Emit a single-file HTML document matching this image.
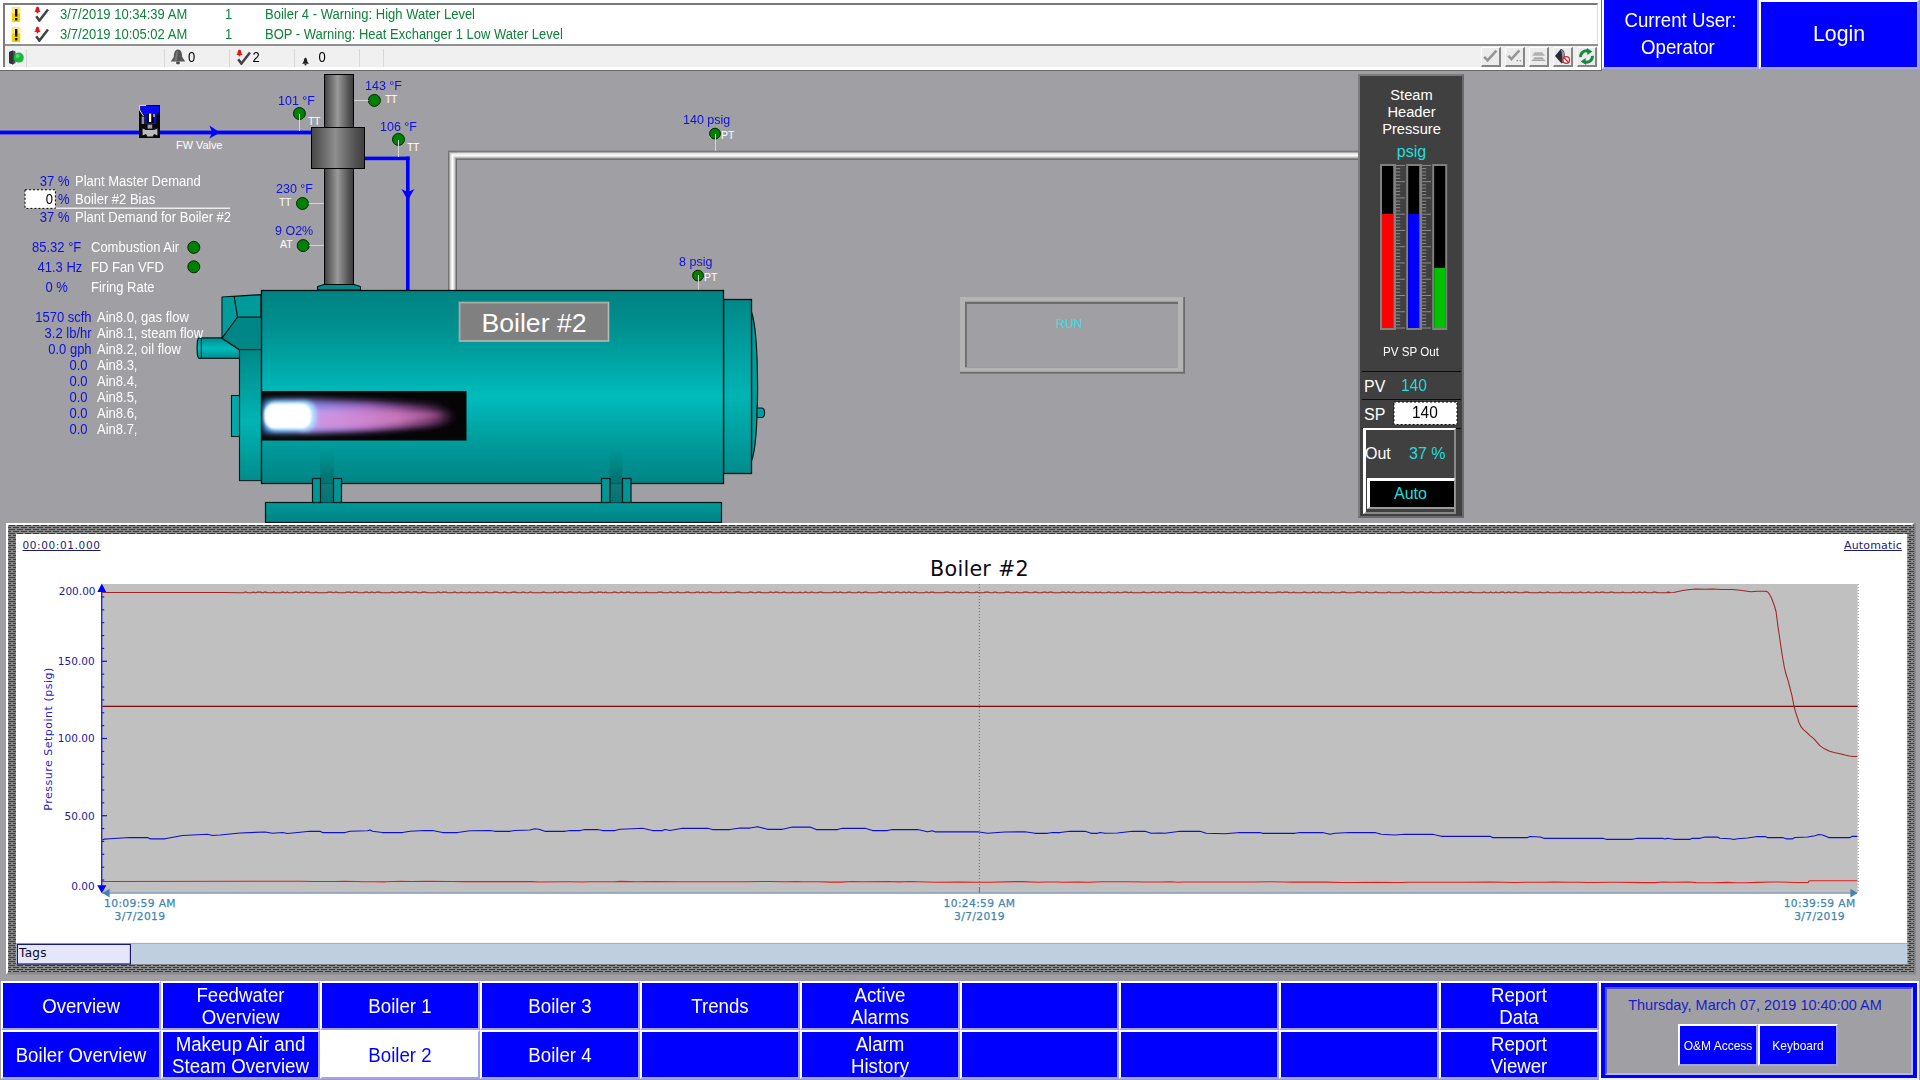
<!DOCTYPE html>
<html lang="en">
<head>
<meta charset="utf-8">
<title>Boiler #2</title>
<style>
*{box-sizing:border-box;margin:0;padding:0}
html,body{width:1920px;height:1080px;overflow:hidden}
body{background:#a0a0a4;font-family:"Liberation Sans",Arial,sans-serif;position:relative;color:#fff}
.abs{position:absolute}
.t{position:absolute;white-space:nowrap;line-height:1}
/* alarm banner */
#alarm{position:absolute;left:0;top:0;width:1602px;height:71px;background:#fff;border-bottom:1px solid #696969;border-right:1px solid #696969}
#alarm .in{position:absolute;left:3px;top:3px;width:1595px;height:64px;border:2px solid #7a7a7a;border-right:1px solid #e0e0e0;border-bottom:none;background:#fff}
#alarm .tb{position:absolute;left:0;top:38.5px;width:1593px;height:23.5px;background:#f0f0f0;border-top:2px solid #909090}
#alarm .tb>*{margin-top:1.5px}
.arow{position:absolute;left:0;height:20px;width:1590px;color:#10823a;font-size:13px}
.arow span{position:absolute;top:2px;line-height:15px;white-space:nowrap;transform:scaleY(1.08);transform-origin:0 80%}
.sep{position:absolute;top:2px;width:1px;height:18px;background:#d8d8d8}
.tbtxt{position:absolute;top:3px;font-size:13px;color:#000;line-height:15px;transform:scaleY(1.08);transform-origin:0 80%}
.tbbtn{position:absolute;top:0px;width:20px;height:20px;background:#ececec;border:1px solid #fff;border-right:2px solid #858585;border-bottom:2px solid #858585}
/* blue buttons */
.bb{position:absolute;background:#0000ff;color:#fff;border:2px solid #fff;border-right-color:#a4a4ee;border-bottom-color:#a4a4ee;display:flex;align-items:center;justify-content:center;text-align:center;font-size:18.67px;line-height:21px}
.nav{height:49px;padding-top:1px}
.bb.sel{background:#fff;color:#0000ff}
.nt{display:inline-block;transform:scaleY(1.05);transform-origin:50% 60%}
</style>
</head>
<body>

<!-- ===== alarm banner ===== -->
<div id="alarm"><div class="in">
  <div class="arow" style="top:0px">
    <svg class="abs" style="left:6px;top:2px" width="10" height="15" viewBox="0 0 10 15"><rect x="0.8" y="0" width="8.4" height="15" fill="#f3d000"/><rect x="0.8" y="0" width="8.4" height="6.5" fill="#fdf0a0" opacity=".75"/><rect x="4" y="2" width="2.4" height="7.6" fill="#111"/><rect x="4" y="11" width="2.4" height="2.4" fill="#111"/></svg>
    <svg class="abs" style="left:29px;top:1px" width="16" height="16" viewBox="0 0 16 16"><path d="M3.4 0.6 C2 1 1.6 3 1.4 4.6 L0.4 6 H6.6 L5.6 4.6 C5.4 3 5 1 3.4 0.6Z" fill="#e8141c"/><rect x="2.6" y="6" width="1.8" height="1.3" fill="#e8141c"/><path d="M2.2 10.2 L5.4 14.6 L14 3.6" fill="none" stroke="#444" stroke-width="2.5"/></svg>
    <span style="left:55px">3/7/2019 10:34:39 AM</span><span style="left:220px">1</span><span style="left:260px">Boiler 4 - Warning: High Water Level</span>
  </div>
  <div class="arow" style="top:20px">
    <svg class="abs" style="left:6px;top:2px" width="10" height="15" viewBox="0 0 10 15"><rect x="0.8" y="0" width="8.4" height="15" fill="#f3d000"/><rect x="0.8" y="0" width="8.4" height="6.5" fill="#fdf0a0" opacity=".75"/><rect x="4" y="2" width="2.4" height="7.6" fill="#111"/><rect x="4" y="11" width="2.4" height="2.4" fill="#111"/></svg>
    <svg class="abs" style="left:29px;top:1px" width="16" height="16" viewBox="0 0 16 16"><path d="M3.4 0.6 C2 1 1.6 3 1.4 4.6 L0.4 6 H6.6 L5.6 4.6 C5.4 3 5 1 3.4 0.6Z" fill="#e8141c"/><rect x="2.6" y="6" width="1.8" height="1.3" fill="#e8141c"/><path d="M2.2 10.2 L5.4 14.6 L14 3.6" fill="none" stroke="#444" stroke-width="2.5"/></svg>
    <span style="left:55px">3/7/2019 10:05:02 AM</span><span style="left:220px">1</span><span style="left:260px">BOP - Warning: Heat Exchanger 1 Low Water Level</span>
  </div>
  <div class="tb">
    <svg class="abs" style="left:4px;top:3px" width="16" height="15" viewBox="0 0 16 15"><path d="M0 2 L4 0.5 L6.5 1.5 V13 L4 14.5 L0 13Z" fill="#4a4f55"/><path d="M0 2 L4 0.5 V14.5 L0 13Z" fill="#30343a"/><circle cx="9.8" cy="7.6" r="5" fill="#18b838"/><circle cx="8.6" cy="6" r="2" fill="#6be084" opacity=".8"/></svg>
    <div class="sep" style="left:21px"></div>
    <div class="sep" style="left:159px"></div>
    <svg class="abs" style="left:164px;top:2px" width="18" height="17" viewBox="0 0 18 17"><path d="M9 0.6 C5.4 1 5 4.6 4.8 8 L1.8 12.6 H16.2 L13.2 8 C13 4.6 12.6 1 9 0.6Z" fill="#565656"/><path d="M9 1.4 C7 2 6.6 5 6.4 8 L5 11.6 H8 Z" fill="#7a7a7a"/><rect x="7.2" y="12.6" width="3.6" height="2.6" rx="1" fill="#4a4a4a"/></svg>
    <span class="tbtxt" style="left:183px">0</span>
    <div class="sep" style="left:224px"></div>
    <svg class="abs" style="left:231px;top:2px" width="16" height="16" viewBox="0 0 16 16"><path d="M3.4 0.6 C2 1 1.6 3 1.4 4.6 L0.4 6 H6.6 L5.6 4.6 C5.4 3 5 1 3.4 0.6Z" fill="#e8141c"/><rect x="2.6" y="6" width="1.8" height="1.3" fill="#e8141c"/><path d="M2.2 10.2 L5.4 14.6 L14 3.6" fill="none" stroke="#444" stroke-width="2.5"/></svg>
    <span class="tbtxt" style="left:247.5px">2</span>
    <div class="sep" style="left:289px"></div>
    <svg class="abs" style="left:295.6px;top:10px" width="9" height="9" viewBox="0 0 8 8"><path d="M4 0.5 C2.6 1 2.6 3 2.4 4 L1 6 H7 L5.6 4 C5.4 3 5.4 1 4 0.5Z" fill="#222"/><rect x="3.2" y="6" width="1.6" height="1.4" fill="#222"/></svg>
    <span class="tbtxt" style="left:313.5px">0</span>
    <div class="sep" style="left:354px"></div>
    <div class="sep" style="left:378px"></div>
    <div class="tbbtn" style="left:1476px"><svg width="17" height="17" viewBox="0 0 17 17"><path d="M2.2 8.8 L5.6 12.4 L14.4 2.6" fill="none" stroke="#969696" stroke-width="2.6"/></svg></div>
    <div class="tbbtn" style="left:1500px"><svg width="17" height="17" viewBox="0 0 17 17"><path d="M2.4 7.8 L5.4 11.2 L13.4 2.4" fill="none" stroke="#969696" stroke-width="2.5"/><rect x="10.6" y="12" width="1.4" height="1.4" fill="#9a9a9a"/><rect x="13.6" y="12" width="1.4" height="1.4" fill="#9a9a9a"/></svg></div>
    <div class="tbbtn" style="left:1524px"><svg width="17" height="17" viewBox="0 0 17 17"><path d="M4.6 4.4 H12.4 L14.8 7.6 H2.2 Z M4.4 9.6 H12.6 L15.4 12.8 H1.6 Z" fill="#8e8e8e"/><path d="M3 6 H14 M2.6 11.2 H14.4" stroke="#ececec" stroke-width=".8"/></svg></div>
    <div class="tbbtn" style="left:1548px"><svg width="17" height="17" viewBox="0 0 17 17"><path d="M1 8 L6.8 1 C9 1 10.6 3 10.8 8 C10.6 12 9 15 7.6 15.4 Z" fill="#2a2e34"/><path d="M6.8 1.6 C9.6 2 10.8 6 10.6 9 C10 12 9 14 7.8 15 C8.6 11 8.4 5 6.8 1.6Z" fill="#8c98a4"/><circle cx="12.2" cy="12" r="3.3" fill="#fff" stroke="#e02030" stroke-width="1.3"/><path d="M10 9.8 L14.4 14.2" stroke="#e02030" stroke-width="1.3"/></svg></div>
    <div class="tbbtn" style="left:1572px"><svg width="17" height="17" viewBox="0 0 17 17"><path d="M2.6 9.2 A5.9 5.9 0 0 1 10 3" fill="none" stroke="#138a3a" stroke-width="2.8"/><path d="M8.8 0 L14.4 3.4 L9.4 7Z" fill="#138a3a"/><path d="M14.4 7.8 A5.9 5.9 0 0 1 7 14" fill="none" stroke="#138a3a" stroke-width="2.8"/><path d="M8.2 17 L2.6 13.6 L7.6 10Z" fill="#138a3a"/></svg></div>
  </div>
</div></div>

<!-- ===== top right buttons ===== -->
<div class="bb" style="left:1602px;top:-2px;width:157px;height:71px;font-size:18.67px;line-height:25.4px;padding-top:1.5px"><span class="nt">Current User:<br>Operator&nbsp;</span></div>
<div class="bb" style="left:1759px;top:0;width:160px;height:69px;font-size:21.33px"><span class="nt">Login</span></div>

<!-- ===== process graphic ===== -->
<style>
.v{position:absolute;white-space:nowrap;line-height:15px;font-size:13px;color:#1010dc;transform:scaleY(1.08);transform-origin:0 80%}
.l{position:absolute;white-space:nowrap;line-height:15px;font-size:13px;color:#fff;transform:scaleY(1.08);transform-origin:0 80%}
.r{text-align:right}
.sv{position:absolute;white-space:nowrap;line-height:14px;font-size:12.5px;color:#1010dc;transform:scaleY(1.08);transform-origin:0 80%}
.tt{position:absolute;white-space:nowrap;line-height:10px;font-size:10.5px;color:#fff;letter-spacing:-0.4px}
</style>
<svg class="abs" style="left:0;top:70px" width="1360" height="453" viewBox="0 70 1360 453">
  <defs>
    <linearGradient id="gPipe" x1="0" x2="1" y1="0" y2="0"><stop offset="0" stop-color="#3c3c3c"/><stop offset=".12" stop-color="#5a5a5a"/><stop offset=".45" stop-color="#9a9a9a"/><stop offset=".8" stop-color="#585858"/><stop offset="1" stop-color="#3a3a3a"/></linearGradient>
    <linearGradient id="gCol" x1="0" x2="1" y1="0" y2="0"><stop offset="0" stop-color="#484848"/><stop offset=".12" stop-color="#585858"/><stop offset=".45" stop-color="#8e8e8e"/><stop offset=".8" stop-color="#565656"/><stop offset="1" stop-color="#3e3e3e"/></linearGradient>
    <linearGradient id="gSteamV" x1="0" x2="1" y1="0" y2="0"><stop offset="0" stop-color="#5c5c5c"/><stop offset=".12" stop-color="#8c8c8c"/><stop offset=".3" stop-color="#e0e0e0"/><stop offset=".5" stop-color="#ffffff"/><stop offset=".7" stop-color="#d8d8d8"/><stop offset=".88" stop-color="#888"/><stop offset="1" stop-color="#505050"/></linearGradient>
    <linearGradient id="gSteamH" x1="0" x2="0" y1="0" y2="1"><stop offset="0" stop-color="#5c5c5c"/><stop offset=".12" stop-color="#8c8c8c"/><stop offset=".3" stop-color="#e0e0e0"/><stop offset=".5" stop-color="#ffffff"/><stop offset=".7" stop-color="#d8d8d8"/><stop offset=".88" stop-color="#888"/><stop offset="1" stop-color="#505050"/></linearGradient>
    <linearGradient id="gBoil" x1="0" x2="0" y1="0" y2="1"><stop offset="0" stop-color="#008282"/><stop offset=".2" stop-color="#009090"/><stop offset=".55" stop-color="#00bcbc"/><stop offset=".8" stop-color="#009a9a"/><stop offset="1" stop-color="#008484"/></linearGradient>
    <linearGradient id="gRear" x1="0" x2="0" y1="0" y2="1"><stop offset="0" stop-color="#008888"/><stop offset=".55" stop-color="#00b4b4"/><stop offset="1" stop-color="#008c8c"/></linearGradient>
    <linearGradient id="gStub" x1="0" x2="0" y1="0" y2="1"><stop offset="0" stop-color="#008a8a"/><stop offset=".5" stop-color="#00bcbc"/><stop offset="1" stop-color="#008c8c"/></linearGradient>
    <linearGradient id="gSkid" x1="0" x2="0" y1="0" y2="1"><stop offset="0" stop-color="#009a9a"/><stop offset="1" stop-color="#008080"/></linearGradient>
    <linearGradient id="gLeg" x1="0" x2="0" y1="0" y2="1"><stop offset="0" stop-color="#008080" stop-opacity="0"/><stop offset=".55" stop-color="#007070" stop-opacity=".85"/><stop offset="1" stop-color="#007474"/></linearGradient>
    <radialGradient id="gFlW" cx=".5" cy=".5" r=".5"><stop offset="0" stop-color="#ffffff"/><stop offset=".55" stop-color="#f4fbff"/><stop offset=".8" stop-color="#9ad4f0" stop-opacity=".9"/><stop offset="1" stop-color="#3070a0" stop-opacity="0"/></radialGradient>
    <linearGradient id="gFlP" x1="0" x2="1" y1="0" y2="0"><stop offset="0" stop-color="#d8a8f4"/><stop offset=".3" stop-color="#d494e4"/><stop offset=".62" stop-color="#cc74b8"/><stop offset=".88" stop-color="#a0508c" stop-opacity=".7"/><stop offset="1" stop-color="#402040" stop-opacity="0"/></linearGradient>
    <linearGradient id="gFlB" x1="0" x2="1" y1="0" y2="0"><stop offset="0" stop-color="#3c88d8"/><stop offset=".22" stop-color="#7c84e0"/><stop offset=".55" stop-color="#8858b0"/><stop offset=".85" stop-color="#603070" stop-opacity=".7"/><stop offset="1" stop-color="#301838" stop-opacity="0"/></linearGradient>
    <filter id="blur3" x="-20%" y="-50%" width="140%" height="200%"><feGaussianBlur stdDeviation="3.2"/></filter>
    <filter id="blur1" x="-20%" y="-50%" width="140%" height="200%"><feGaussianBlur stdDeviation="1.2"/></filter>
    <filter id="blur2" x="-20%" y="-50%" width="140%" height="200%"><feGaussianBlur stdDeviation="2"/></filter>
  </defs>

  <!-- steam pipe (white/gray) -->
  <rect x="448" y="150.8" width="912" height="8.8" fill="url(#gSteamH)"/>
  <rect x="448" y="151" width="9" height="140" fill="url(#gSteamV)"/>
  <path d="M448 151 H457 V159.5 Z" fill="url(#gSteamH)"/>

  <!-- feedwater line -->
  <rect x="0" y="130.6" width="312" height="3.8" fill="#0000ff"/>
  <path d="M209.4 125.4 L220 132.5 L209.4 138.6 L212.2 132.5 Z" fill="#0000ff"/>
  <rect x="364" y="156.6" width="45.6" height="3.6" fill="#0000ff"/>
  <rect x="406" y="156.6" width="3.6" height="134" fill="#0000ff"/>
  <path d="M401.4 189 L407.8 200.2 L414.4 189 L407.8 192.2 Z" fill="#0000ff"/>

  <!-- valve icon -->
  <rect x="139" y="105" width="21" height="33" fill="#0a0a0a"/>
  <path d="M140.5 106 H159.4 V111 C159.4 113 157 113.6 156.4 115 L156 124 H145 L144.6 115 C144 113.6 140.5 113 140.5 111 Z" fill="#0a0af0"/>
  <rect x="146.6" y="114" width="7.4" height="9" fill="#0a0a0a"/>
  <rect x="149" y="113.6" width="2.2" height="8.4" fill="#fff"/>
  <rect x="153.4" y="114" width="1.2" height="3" fill="#e8e8e8"/>
  <rect x="141.6" y="116.6" width="2.6" height="7.4" fill="#8c8cb4"/>
  <rect x="147.6" y="124.6" width="4.6" height="4" fill="#9c9cb8"/>
  <path d="M142.6 128.4 L146 130 H154 L157.4 128.4 V135.6 L154 134 L152.6 136.4 H147.4 L146 134 L142.6 135.6 Z" fill="#bcbcbc"/>
  <path d="M139.4 105.4 H146 M139.6 105.4 V110 L143.4 116" fill="none" stroke="#fff" stroke-width="0.9"/>

  <!-- stack -->
  <rect x="324.5" y="74.5" width="29" height="211" fill="url(#gPipe)" stroke="#000" stroke-width="1"/>
  <rect x="311.5" y="127.5" width="53" height="41" fill="url(#gCol)" stroke="#000" stroke-width="1"/>
  <path d="M317.5 290 V286.5 L324 284.5 H354 L360.5 286.5 V290 Z" fill="#008c8c" stroke="#000" stroke-width="1"/>

  <!-- sensor bulbs -->
  <g fill="#008000" stroke="#002800" stroke-width="1">
    <circle cx="299.4" cy="113.5" r="6"/><circle cx="374.4" cy="100.4" r="6"/><circle cx="398.5" cy="139.4" r="6"/>
    <circle cx="302.5" cy="203.5" r="6"/><circle cx="303.2" cy="245.6" r="6"/>
    <circle cx="715" cy="133.6" r="5.4"/><circle cx="698" cy="275.6" r="5.4"/>
    <circle cx="193.8" cy="247.4" r="6"/><circle cx="193.8" cy="266.8" r="6"/>
  </g>

  <!-- sensor leader lines -->
  <g stroke="#d4d4d4" stroke-width="1">
    <path d="M299.5 114 V131"/><path d="M354 100.5 H368.4"/><path d="M398.5 140 V157"/><path d="M308.6 203.5 H324"/><path d="M309.2 245.5 H324"/>
    <path d="M715.5 134 V151"/><path d="M698.5 275 V290"/>
  </g>
  <!-- boiler -->
  <!-- skid and legs -->
  <rect x="265.5" y="502.5" width="456" height="20" fill="url(#gSkid)" stroke="#001818" stroke-width="1.2"/>
  <!-- rear -->
  <path d="M751.5 312 C755 322 757.4 350 757.6 388 C757.4 425 755 452 751.5 461 Z" fill="#009c9c" stroke="#001818" stroke-width="1.2"/>
  <path d="M757 408 H761.6 C765.6 408 765.6 417.5 761.6 417.5 H757 Z" fill="#00a0a0" stroke="#001818" stroke-width="1.1"/>
  <rect x="723.5" y="299.5" width="28" height="174" fill="url(#gRear)" stroke="#001010" stroke-width="1.3"/>
  <!-- front -->
  <path d="M239.5 337.9 H199 C196.4 337.9 196.4 358.3 199 358.3 H239.5 Z" fill="url(#gStub)" stroke="#001c1c" stroke-width="1.2"/>
  <path d="M201.3 338 V358.2" stroke="#002828" stroke-width="1"/>
  <path d="M222.1 297.1 L261 294.6 V349.6 H239.2 L222.1 338.2 Z" fill="#009a9a" stroke="#001414" stroke-width="1.3" stroke-linejoin="round"/>
  <path d="M237.5 317.1 H261 V349.4 H239.2 L222.6 338.4 Z" fill="#008686"/>
  <path d="M222.6 297.6 L234.2 297 L237.5 316.9 L222.6 337.8 Z" fill="#009c9c"/>
  <path d="M234.2 296.6 L237.5 317 L222.1 338.2 L239.2 349.6 H261 M237.5 317.1 H261" fill="none" stroke="#001414" stroke-width="1.2" stroke-linejoin="round"/>
  <rect x="239.5" y="349.6" width="22" height="131" fill="url(#gRear)" stroke="#002020" stroke-width="1.1"/>
  <rect x="231.5" y="395.5" width="8" height="41" fill="#00a8a8" stroke="#002020" stroke-width="1.1"/>
  <!-- shell -->
  <rect x="261.5" y="290.5" width="462" height="193" fill="url(#gBoil)" stroke="#001010" stroke-width="1.3"/>
  <!-- legs (front plates) -->
  <rect x="320" y="450" width="14" height="52.5" fill="url(#gLeg)"/>
  <rect x="609.5" y="450" width="13" height="52.5" fill="url(#gLeg)"/>
  <g fill="#009494" stroke="#001818" stroke-width="1.2">
    <rect x="312.5" y="478.5" width="8" height="24"/><rect x="333.5" y="478.5" width="8" height="24"/>
    <rect x="601.5" y="478.5" width="8.5" height="24"/><rect x="622.5" y="478.5" width="8.5" height="24"/>
  </g>
  <!-- flame window -->
  <rect x="261.5" y="391" width="205" height="49.5" fill="#050505"/>
  <g>
    <clipPath id="cf"><rect x="261.5" y="391" width="205" height="49.5"/></clipPath>
    <g clip-path="url(#cf)">
      <path d="M263 400 C300 398 380 401 440 405 C462 410 462 421 440 426 C380 431 300 434 263 433 Z" fill="url(#gFlB)" filter="url(#blur3)"/>
      <path d="M300 409 C350 406 420 408 454 412 C459 415 459 419 454 421 C420 427 350 431 300 430 Z" fill="url(#gFlP)" filter="url(#blur3)" opacity=".82"/>
      <path d="M320 416 C360 413 410 412 446 414 C410 421 360 427 320 427 Z" fill="#e08ccc" opacity=".35" filter="url(#blur2)"/>
      <rect x="264" y="401" width="52" height="30" rx="12" fill="#a8e4ff" filter="url(#blur2)"/>
      <rect x="264.5" y="403.5" width="47" height="25" rx="10" fill="#fff" filter="url(#blur1)"/>
    </g>
  </g>
  <!-- label plate -->
  <rect x="459.5" y="302.5" width="149" height="38.5" fill="#808080" stroke="#b8b8b8" stroke-width="1.6"/>
  <path d="M460 341 V303 H608" fill="none" stroke="#9a9a9a" stroke-width="1.2"/>
  <text x="534" y="331.6" font-size="26.67" fill="#fff" text-anchor="middle" font-family="Liberation Sans, Arial, sans-serif">Boiler #2</text>

  <!-- underline for bias -->
  <rect x="55" y="207.6" width="175" height="1.2" fill="#fff"/>

  <!-- RUN box -->
  <rect x="960" y="297" width="225" height="76.7" fill="#6c6c6c"/>
  <rect x="960" y="297" width="223.2" height="74.8" fill="#b4b4b4"/>
  <rect x="965" y="301.7" width="213" height="65.6" fill="#6c6c6c"/>
  <rect x="966.8" y="304" width="211.2" height="63.3" fill="#a0a0a4"/>
</svg>

<!-- valve / sensor text -->
<div class="tt" style="left:176px;top:140px;font-size:10.9px;letter-spacing:0">FW Valve</div>
<div class="sv" style="left:278px;top:94px">101 °F</div><div class="tt" style="left:308px;top:116px">TT</div>
<div class="sv" style="left:365px;top:79px">143 °F</div><div class="tt" style="left:385px;top:94px">TT</div>
<div class="sv" style="left:380px;top:120px">106 °F</div><div class="tt" style="left:407px;top:142px">TT</div>
<div class="sv" style="left:276px;top:182px">230 °F</div><div class="tt" style="left:279px;top:197px">TT</div>
<div class="sv" style="left:275px;top:224px">9 O2%</div><div class="tt" style="left:280px;top:239px;letter-spacing:0">AT</div>
<div class="sv" style="left:683px;top:113px">140 psig</div><div class="tt" style="left:721px;top:130px;letter-spacing:0">PT</div>
<div class="sv" style="left:679px;top:255px">8 psig</div><div class="tt" style="left:704px;top:272px;letter-spacing:0">PT</div>

<!-- demand block -->
<div class="v r" style="left:20px;width:49.5px;top:174px">37 %</div><div class="l" style="left:75px;top:174px">Plant Master Demand</div>
<svg class="abs" style="left:24px;top:189px" width="33" height="21"><rect x="1" y="0.8" width="30.4" height="18.6" fill="#fff"/><rect x="1" y="0.8" width="30.4" height="18.6" fill="none" stroke="#000" stroke-width="1" stroke-dasharray="2 2"/></svg>
<div class="v r" style="left:20px;width:33px;top:192px;color:#000">0</div>
<div class="v r" style="left:20px;width:49.5px;top:192px">%</div><div class="l" style="left:75px;top:192px">Boiler #2 Bias</div>
<div class="v r" style="left:20px;width:49.5px;top:210px">37 %</div><div class="l" style="left:75px;top:210px">Plant Demand for Boiler #2</div>

<div class="v" style="left:32px;top:240px">85.32 °F</div><div class="l" style="left:91px;top:240px">Combustion Air</div>
<div class="v" style="left:37.5px;top:260px">41.3 Hz</div><div class="l" style="left:91px;top:260px">FD Fan VFD</div>
<div class="v" style="left:45.5px;top:280px">0 %</div><div class="l" style="left:91px;top:280px">Firing Rate</div>

<div class="v r" style="left:20px;width:71.6px;top:310px">1570 scfh</div><div class="l" style="left:97px;top:310px">Ain8.0, gas flow</div>
<div class="v r" style="left:20px;width:71.6px;top:326px">3.2 lb/hr</div><div class="l" style="left:97px;top:326px">Ain8.1, steam flow</div>
<div class="v r" style="left:20px;width:71.6px;top:342px">0.0 gph</div><div class="l" style="left:97px;top:342px">Ain8.2, oil flow</div>
<div class="v r" style="left:20px;width:67.6px;top:358px">0.0</div><div class="l" style="left:97px;top:358px">Ain8.3,</div>
<div class="v r" style="left:20px;width:67.6px;top:374px">0.0</div><div class="l" style="left:97px;top:374px">Ain8.4,</div>
<div class="v r" style="left:20px;width:67.6px;top:390px">0.0</div><div class="l" style="left:97px;top:390px">Ain8.5,</div>
<div class="v r" style="left:20px;width:67.6px;top:406px">0.0</div><div class="l" style="left:97px;top:406px">Ain8.6,</div>
<div class="v r" style="left:20px;width:67.6px;top:422px">0.0</div><div class="l" style="left:97px;top:422px">Ain8.7,</div>

<div class="t" style="left:1056px;top:317.5px;font-size:12.3px;color:#18e8e8">RUN</div>


<!-- ===== steam header pressure faceplate ===== -->
<div class="abs" style="left:1358px;top:74px;width:106px;height:444px;background:#404040;border:2px solid #7c7c7c;border-right-color:#6a6a6a;border-bottom-color:#6a6a6a"></div>
<div class="t" style="left:1358px;width:107px;top:87px;text-align:center;font-size:14.67px;line-height:17px;white-space:normal">Steam<br>Header<br>Pressure</div>
<div class="t" style="left:1358px;width:107px;top:142.6px;text-align:center;font-size:16px;line-height:18px;color:#20dede">psig</div>
<svg class="abs" style="left:1358px;top:160px" width="106" height="175" viewBox="1358 160 106 175">
  <rect x="1380" y="164" width="16" height="166" fill="#808080"/><rect x="1382" y="166" width="11.2" height="162" fill="#000"/><rect x="1382" y="214" width="11.2" height="114" fill="#ff0000"/>
  <rect x="1406.2" y="164" width="15.8" height="166" fill="#808080"/><rect x="1408.2" y="166" width="11" height="162" fill="#000"/><rect x="1408.2" y="214" width="11" height="114" fill="#0000ff"/>
  <rect x="1432.2" y="164" width="15" height="166" fill="#808080"/><rect x="1434.2" y="166" width="11" height="162" fill="#000"/><rect x="1434.2" y="268" width="11" height="60" fill="#00c000"/>
  <g fill="#8c8c8c"><rect x="1396" y="164.90" width="9" height="1" /><rect x="1396" y="168.15" width="4.2" height="1" /><rect x="1396" y="171.40" width="4.2" height="1" /><rect x="1396" y="174.66" width="4.2" height="1" /><rect x="1396" y="177.91" width="4.2" height="1" /><rect x="1396" y="181.16" width="9" height="1" /><rect x="1396" y="184.41" width="4.2" height="1" /><rect x="1396" y="187.66" width="4.2" height="1" /><rect x="1396" y="190.92" width="4.2" height="1" /><rect x="1396" y="194.17" width="4.2" height="1" /><rect x="1396" y="197.42" width="9" height="1" /><rect x="1396" y="200.67" width="4.2" height="1" /><rect x="1396" y="203.92" width="4.2" height="1" /><rect x="1396" y="207.18" width="4.2" height="1" /><rect x="1396" y="210.43" width="4.2" height="1" /><rect x="1396" y="213.68" width="9" height="1" /><rect x="1396" y="216.93" width="4.2" height="1" /><rect x="1396" y="220.18" width="4.2" height="1" /><rect x="1396" y="223.44" width="4.2" height="1" /><rect x="1396" y="226.69" width="4.2" height="1" /><rect x="1396" y="229.94" width="9" height="1" /><rect x="1396" y="233.19" width="4.2" height="1" /><rect x="1396" y="236.44" width="4.2" height="1" /><rect x="1396" y="239.70" width="4.2" height="1" /><rect x="1396" y="242.95" width="4.2" height="1" /><rect x="1396" y="246.20" width="9" height="1" /><rect x="1396" y="249.45" width="4.2" height="1" /><rect x="1396" y="252.70" width="4.2" height="1" /><rect x="1396" y="255.96" width="4.2" height="1" /><rect x="1396" y="259.21" width="4.2" height="1" /><rect x="1396" y="262.46" width="9" height="1" /><rect x="1396" y="265.71" width="4.2" height="1" /><rect x="1396" y="268.96" width="4.2" height="1" /><rect x="1396" y="272.22" width="4.2" height="1" /><rect x="1396" y="275.47" width="4.2" height="1" /><rect x="1396" y="278.72" width="9" height="1" /><rect x="1396" y="281.97" width="4.2" height="1" /><rect x="1396" y="285.22" width="4.2" height="1" /><rect x="1396" y="288.48" width="4.2" height="1" /><rect x="1396" y="291.73" width="4.2" height="1" /><rect x="1396" y="294.98" width="9" height="1" /><rect x="1396" y="298.23" width="4.2" height="1" /><rect x="1396" y="301.48" width="4.2" height="1" /><rect x="1396" y="304.74" width="4.2" height="1" /><rect x="1396" y="307.99" width="4.2" height="1" /><rect x="1396" y="311.24" width="9" height="1" /><rect x="1396" y="314.49" width="4.2" height="1" /><rect x="1396" y="317.74" width="4.2" height="1" /><rect x="1396" y="321.00" width="4.2" height="1" /><rect x="1396" y="324.25" width="4.2" height="1" /><rect x="1396" y="327.50" width="9" height="1" /><rect x="1422" y="164.90" width="9" height="1" /><rect x="1422" y="168.15" width="4.2" height="1" /><rect x="1422" y="171.40" width="4.2" height="1" /><rect x="1422" y="174.66" width="4.2" height="1" /><rect x="1422" y="177.91" width="4.2" height="1" /><rect x="1422" y="181.16" width="9" height="1" /><rect x="1422" y="184.41" width="4.2" height="1" /><rect x="1422" y="187.66" width="4.2" height="1" /><rect x="1422" y="190.92" width="4.2" height="1" /><rect x="1422" y="194.17" width="4.2" height="1" /><rect x="1422" y="197.42" width="9" height="1" /><rect x="1422" y="200.67" width="4.2" height="1" /><rect x="1422" y="203.92" width="4.2" height="1" /><rect x="1422" y="207.18" width="4.2" height="1" /><rect x="1422" y="210.43" width="4.2" height="1" /><rect x="1422" y="213.68" width="9" height="1" /><rect x="1422" y="216.93" width="4.2" height="1" /><rect x="1422" y="220.18" width="4.2" height="1" /><rect x="1422" y="223.44" width="4.2" height="1" /><rect x="1422" y="226.69" width="4.2" height="1" /><rect x="1422" y="229.94" width="9" height="1" /><rect x="1422" y="233.19" width="4.2" height="1" /><rect x="1422" y="236.44" width="4.2" height="1" /><rect x="1422" y="239.70" width="4.2" height="1" /><rect x="1422" y="242.95" width="4.2" height="1" /><rect x="1422" y="246.20" width="9" height="1" /><rect x="1422" y="249.45" width="4.2" height="1" /><rect x="1422" y="252.70" width="4.2" height="1" /><rect x="1422" y="255.96" width="4.2" height="1" /><rect x="1422" y="259.21" width="4.2" height="1" /><rect x="1422" y="262.46" width="9" height="1" /><rect x="1422" y="265.71" width="4.2" height="1" /><rect x="1422" y="268.96" width="4.2" height="1" /><rect x="1422" y="272.22" width="4.2" height="1" /><rect x="1422" y="275.47" width="4.2" height="1" /><rect x="1422" y="278.72" width="9" height="1" /><rect x="1422" y="281.97" width="4.2" height="1" /><rect x="1422" y="285.22" width="4.2" height="1" /><rect x="1422" y="288.48" width="4.2" height="1" /><rect x="1422" y="291.73" width="4.2" height="1" /><rect x="1422" y="294.98" width="9" height="1" /><rect x="1422" y="298.23" width="4.2" height="1" /><rect x="1422" y="301.48" width="4.2" height="1" /><rect x="1422" y="304.74" width="4.2" height="1" /><rect x="1422" y="307.99" width="4.2" height="1" /><rect x="1422" y="311.24" width="9" height="1" /><rect x="1422" y="314.49" width="4.2" height="1" /><rect x="1422" y="317.74" width="4.2" height="1" /><rect x="1422" y="321.00" width="4.2" height="1" /><rect x="1422" y="324.25" width="4.2" height="1" /><rect x="1422" y="327.50" width="9" height="1" /></g>
</svg>
<div class="t" style="left:1383px;top:346px;font-size:11.6px;line-height:12px;transform:scaleY(1.07);transform-origin:0 85%">PV SP Out</div>
<div class="abs" style="left:1362px;top:371.2px;width:99px;height:1.1px;background:#0c0c0c"></div>
<div class="t" style="left:1364px;top:379px;font-size:16px;line-height:16px">PV</div>
<div class="t" style="left:1401px;top:378px;font-size:15.5px;line-height:16px;color:#20dede;transform:scaleY(1.1);transform-origin:0 85%">140</div>
<div class="abs" style="left:1362px;top:399.2px;width:99px;height:1.1px;background:#0c0c0c"></div>
<div class="t" style="left:1364px;top:406.6px;font-size:16px;line-height:16px">SP</div>
<svg class="abs" style="left:1393px;top:401px" width="65" height="25"><rect x="1" y="1" width="63" height="22.6" fill="#fff"/><rect x="1" y="1" width="63" height="22.6" fill="none" stroke="#000" stroke-width="1" stroke-dasharray="2 2"/></svg>
<div class="t" style="left:1412px;top:405px;font-size:15.5px;line-height:16px;color:#000;transform:scaleY(1.1);transform-origin:0 85%">140</div>
<div class="abs" style="left:1362px;top:427.7px;width:99px;height:1.1px;background:#0c0c0c"></div>
<!-- out box -->
<div class="abs" style="left:1363px;top:427.5px;width:93px;height:86px;border:3px solid #fff;border-top-width:2.5px;border-right:2px solid #8a8a8a;border-bottom:2px solid #8a8a8a"></div>
<div class="t" style="left:1365px;top:446px;font-size:16px;line-height:16px">Out</div>
<div class="t" style="left:1409px;top:446px;font-size:16px;line-height:16px;color:#20dede">37 %</div>
<div class="abs" style="left:1366.5px;top:478px;width:88px;height:30.5px;background:#000;border:3px solid #fff;border-right:1.5px solid #9a9a9a;border-bottom:2px solid #9a9a9a"></div>
<div class="t" style="left:1394px;top:485.5px;font-size:16px;line-height:16px;color:#20dede">Auto</div>


<!-- ===== trend chart ===== -->
<style>
.cf{font-family:"DejaVu Sans","Liberation Sans",Verdana,sans-serif}
.yl{position:absolute;width:60px;left:35.5px;text-align:right;font-size:10.5px;line-height:12px;color:#1c1ca0;white-space:nowrap}
.xl{position:absolute;width:120px;text-align:center;font-size:10.7px;line-height:13px;color:#3f86b4;white-space:nowrap;letter-spacing:.35px;-webkit-text-stroke:.25px #3f86b4}
</style>
<svg class="abs" style="left:0;top:520px" width="1920" height="458" viewBox="0 520 1920 458">
  <defs>
    <pattern id="hatch" x="0" y="525" width="8" height="4" patternUnits="userSpaceOnUse">
      <rect x="0" y="0" width="8" height="4" fill="#8e8e8e"/>
      <rect x="1" y="0" width="6" height="1.1" fill="#3c3c3c"/>
      <rect x="5" y="2" width="3" height="1.1" fill="#3c3c3c"/><rect x="0" y="2" width="3" height="1.1" fill="#3c3c3c"/>
    </pattern>
  </defs>
  <rect x="6" y="523" width="1910" height="451.6" fill="#8c8c8c"/>
  <path d="M6 523 H1914 L1912 525 H8 V972.6 L6 974.6 Z" fill="#fff"/>
  <rect x="8" y="525" width="1906.2" height="447.6" fill="url(#hatch)"/>
  <rect x="16" y="534" width="1891.2" height="430" fill="#fff"/>
  <!-- tag strip -->
  <rect x="16" y="943.6" width="1891.2" height="20.4" fill="#c0cfdf"/>
  <rect x="16" y="942.9" width="1891.2" height="1" fill="#a4a8ae"/>
  <rect x="17.4" y="944.4" width="113" height="19.6" fill="#e6e6fa" stroke="#101070" stroke-width="1.1"/>
  <!-- plot -->
  <rect x="102.4" y="584" width="1755.2" height="309" fill="#c0c0c0"/>
  <line x1="979.4" y1="584" x2="979.4" y2="893" stroke="#6c6c6c" stroke-width="1" stroke-dasharray="1 2"/>
  <line x1="1858.2" y1="584" x2="1858.2" y2="893" stroke="#8c8c8c" stroke-width="1" stroke-dasharray="1 2"/>
<polyline points="102.4,706.40 1857.6,706.40" fill="none" stroke="#7a0a0a" stroke-width="1.2" stroke-linejoin="round" />
<polyline points="102.4,592.45 122.4,592.45 142.4,592.45 162.4,592.45 182.4,592.45 202.4,592.45 222.4,592.45 240.0,592.75 244.0,592.75 244.6,592.10 246.6,592.10 247.2,592.75 252.2,592.75 252.8,592.10 253.8,592.10 254.4,592.75 256.4,592.75 257.0,592.10 261.0,592.10 261.6,592.75 263.6,592.75 264.2,592.10 266.2,592.10 266.8,592.75 272.8,592.75 273.4,592.10 274.4,592.10 275.0,592.75 281.0,592.75 281.6,592.10 283.6,592.10 284.2,592.75 286.2,592.75 286.8,592.10 287.8,592.10 288.4,592.75 293.4,592.75 294.0,592.10 297.0,592.10 297.6,592.75 299.6,592.75 300.2,592.10 302.2,592.10 302.8,592.75 304.8,592.75 305.4,592.10 309.4,592.10 310.0,592.75 315.0,592.75 315.6,592.10 316.6,592.10 317.2,592.75 327.2,592.75 327.8,592.10 331.8,592.10 332.4,592.75 334.4,592.75 335.0,592.10 337.0,592.10 337.6,592.75 345.6,592.75 346.2,592.10 350.2,592.10 350.8,592.75 352.8,592.75 353.4,592.10 357.4,592.10 358.0,592.75 364.0,592.75 364.6,592.10 367.6,592.10 368.2,592.75 370.2,592.75 370.8,592.10 372.8,592.10 373.4,592.75 375.4,592.75 376.0,592.10 380.0,592.10 380.6,592.75 390.6,592.75 391.2,592.10 393.2,592.10 393.8,592.75 397.8,592.75 398.4,592.10 401.4,592.10 402.0,592.75 405.0,592.75 405.6,592.10 409.6,592.10 410.2,592.75 412.2,592.75 412.8,592.10 416.8,592.10 417.4,592.75 421.4,592.75 422.0,592.10 426.0,592.10 426.6,592.75 436.6,592.75 437.2,592.10 439.2,592.10 439.8,592.75 441.8,592.75 442.4,592.10 446.4,592.10 447.0,592.75 453.0,592.75 453.6,592.10 455.6,592.10 456.2,592.75 460.2,592.75 460.8,592.10 461.8,592.10 462.4,592.75 468.4,592.75 469.0,592.10 470.0,592.10 470.6,592.75 476.6,592.75 477.2,592.10 478.2,592.10 478.8,592.75 484.8,592.75 485.4,592.10 487.4,592.10 488.0,592.75 493.0,592.75 493.6,592.10 497.6,592.10 498.2,592.75 503.2,592.75 503.8,592.10 505.8,592.10 506.4,592.75 511.4,592.75 512.0,592.10 516.0,592.10 516.6,592.75 521.6,592.75 522.2,592.10 524.2,592.10 524.8,592.75 528.8,592.75 529.4,592.10 531.4,592.10 532.0,592.75 542.0,592.75 542.6,592.10 544.6,592.10 545.2,592.75 553.2,592.75 553.8,592.10 555.8,592.10 556.4,592.75 558.4,592.75 559.0,592.10 563.0,592.10 563.6,592.75 567.6,592.75 568.2,592.10 572.2,592.10 572.8,592.75 577.8,592.75 578.4,592.10 580.4,592.10 581.0,592.75 589.0,592.75 589.6,592.10 592.6,592.10 593.2,592.75 597.2,592.75 597.8,592.10 601.8,592.10 602.4,592.75 604.4,592.75 605.0,592.10 606.0,592.10 606.6,592.75 612.6,592.75 613.2,592.10 616.2,592.10 616.8,592.75 619.8,592.75 620.4,592.10 622.4,592.10 623.0,592.75 626.0,592.75 626.6,592.10 629.6,592.10 630.2,592.75 635.2,592.75 635.8,592.10 636.8,592.10 637.4,592.75 645.4,592.75 646.0,592.10 647.0,592.10 647.6,592.75 657.6,592.75 658.2,592.10 662.2,592.10 662.8,592.75 668.8,592.75 669.4,592.10 671.4,592.10 672.0,592.75 676.0,592.75 676.6,592.10 678.6,592.10 679.2,592.75 685.2,592.75 685.8,592.10 688.8,592.10 689.4,592.75 695.4,592.75 696.0,592.10 699.0,592.10 699.6,592.75 701.6,592.75 702.2,592.10 703.2,592.10 703.8,592.75 707.8,592.75 708.4,592.10 711.4,592.10 712.0,592.75 720.0,592.75 720.6,592.10 721.6,592.10 722.2,592.75 724.2,592.75 724.8,592.10 726.8,592.10 727.4,592.75 735.4,592.75 736.0,592.10 740.0,592.10 740.6,592.75 748.6,592.75 749.2,592.10 752.2,592.10 752.8,592.75 756.8,592.75 757.4,592.10 760.4,592.10 761.0,592.75 769.0,592.75 769.6,592.10 771.6,592.10 772.2,592.75 774.2,592.75 774.8,592.10 777.8,592.10 778.4,592.75 782.4,592.75 783.0,592.10 785.0,592.10 785.6,592.75 791.6,592.75 792.2,592.10 793.2,592.10 793.8,592.75 798.8,592.75 799.4,592.10 800.4,592.10 801.0,592.75 804.0,592.75 804.6,592.10 806.6,592.10 807.2,592.75 810.2,592.75 810.8,592.10 812.8,592.10 813.4,592.75 818.4,592.75 819.0,592.10 822.0,592.10 822.6,592.75 832.6,592.75 833.2,592.10 836.2,592.10 836.8,592.75 838.8,592.75 839.4,592.10 841.4,592.10 842.0,592.75 847.0,592.75 847.6,592.10 850.6,592.10 851.2,592.75 857.2,592.75 857.8,592.10 859.8,592.10 860.4,592.75 863.4,592.75 864.0,592.10 867.0,592.10 867.6,592.75 877.6,592.75 878.2,592.10 882.2,592.10 882.8,592.75 886.8,592.75 887.4,592.10 890.4,592.10 891.0,592.75 895.0,592.75 895.6,592.10 898.6,592.10 899.2,592.75 902.2,592.75 902.8,592.10 904.8,592.10 905.4,592.75 907.4,592.75 908.0,592.10 910.0,592.10 910.6,592.75 913.6,592.75 914.2,592.10 916.2,592.10 916.8,592.75 924.8,592.75 925.4,592.10 927.4,592.10 928.0,592.75 930.0,592.75 930.6,592.10 933.6,592.10 934.2,592.75 944.2,592.75 944.8,592.10 948.8,592.10 949.4,592.75 952.4,592.75 953.0,592.10 955.0,592.10 955.6,592.75 959.6,592.75 960.2,592.10 961.2,592.10 961.8,592.75 964.8,592.75 965.4,592.10 968.4,592.10 969.0,592.75 975.0,592.75 975.6,592.10 977.6,592.10 978.2,592.75 984.2,592.75 984.8,592.10 988.8,592.10 989.4,592.75 993.4,592.75 994.0,592.10 996.0,592.10 996.6,592.75 1004.6,592.75 1005.2,592.10 1009.2,592.10 1009.8,592.75 1015.8,592.75 1016.4,592.10 1017.4,592.10 1018.0,592.75 1023.0,592.75 1023.6,592.10 1027.6,592.10 1028.2,592.75 1033.2,592.75 1033.8,592.10 1036.8,592.10 1037.4,592.75 1042.4,592.75 1043.0,592.10 1046.0,592.10 1046.6,592.75 1048.6,592.75 1049.2,592.10 1052.2,592.10 1052.8,592.75 1060.8,592.75 1061.4,592.10 1064.4,592.10 1065.0,592.75 1067.0,592.75 1067.6,592.10 1069.6,592.10 1070.2,592.75 1072.2,592.75 1072.8,592.10 1074.8,592.10 1075.4,592.75 1080.4,592.75 1081.0,592.10 1083.0,592.10 1083.6,592.75 1085.6,592.75 1086.2,592.10 1088.2,592.10 1088.8,592.75 1094.8,592.75 1095.4,592.10 1096.4,592.10 1097.0,592.75 1099.0,592.75 1099.6,592.10 1100.6,592.10 1101.2,592.75 1107.2,592.75 1107.8,592.10 1109.8,592.10 1110.4,592.75 1116.4,592.75 1117.0,592.10 1118.0,592.10 1118.6,592.75 1122.6,592.75 1123.2,592.10 1127.2,592.10 1127.8,592.75 1129.8,592.75 1130.4,592.10 1131.4,592.10 1132.0,592.75 1142.0,592.75 1142.6,592.10 1144.6,592.10 1145.2,592.75 1151.2,592.75 1151.8,592.10 1154.8,592.10 1155.4,592.75 1158.4,592.75 1159.0,592.10 1161.0,592.10 1161.6,592.75 1165.6,592.75 1166.2,592.10 1170.2,592.10 1170.8,592.75 1174.8,592.75 1175.4,592.10 1178.4,592.10 1179.0,592.75 1181.0,592.75 1181.6,592.10 1182.6,592.10 1183.2,592.75 1193.2,592.75 1193.8,592.10 1196.8,592.10 1197.4,592.75 1202.4,592.75 1203.0,592.10 1206.0,592.10 1206.6,592.75 1211.6,592.75 1212.2,592.10 1214.2,592.10 1214.8,592.75 1216.8,592.75 1217.4,592.10 1219.4,592.10 1220.0,592.75 1222.0,592.75 1222.6,592.10 1224.6,592.10 1225.2,592.75 1233.2,592.75 1233.8,592.10 1235.8,592.10 1236.4,592.75 1241.4,592.75 1242.0,592.10 1244.0,592.10 1244.6,592.75 1250.6,592.75 1251.2,592.10 1252.2,592.10 1252.8,592.75 1255.8,592.75 1256.4,592.10 1260.4,592.10 1261.0,592.75 1265.0,592.75 1265.6,592.10 1267.6,592.10 1268.2,592.75 1276.2,592.75 1276.8,592.10 1280.8,592.10 1281.4,592.75 1283.4,592.75 1284.0,592.10 1288.0,592.10 1288.6,592.75 1292.6,592.75 1293.2,592.10 1294.2,592.10 1294.8,592.75 1302.8,592.75 1303.4,592.10 1305.4,592.10 1306.0,592.75 1312.0,592.75 1312.6,592.10 1314.6,592.10 1315.2,592.75 1318.2,592.75 1318.8,592.10 1320.8,592.10 1321.4,592.75 1331.4,592.75 1332.0,592.10 1334.0,592.10 1334.6,592.75 1340.6,592.75 1341.2,592.10 1345.2,592.10 1345.8,592.75 1355.8,592.75 1356.4,592.10 1360.4,592.10 1361.0,592.75 1365.0,592.75 1365.6,592.10 1367.6,592.10 1368.2,592.75 1374.2,592.75 1374.8,592.10 1376.8,592.10 1377.4,592.75 1387.4,592.75 1388.0,592.10 1390.0,592.10 1390.6,592.75 1400.6,592.75 1401.2,592.10 1404.2,592.10 1404.8,592.75 1412.8,592.75 1413.4,592.10 1415.4,592.10 1416.0,592.75 1419.0,592.75 1419.6,592.10 1423.6,592.10 1424.2,592.75 1429.2,592.75 1429.8,592.10 1431.8,592.10 1432.4,592.75 1440.4,592.75 1441.0,592.10 1442.0,592.10 1442.6,592.75 1444.6,592.75 1445.2,592.10 1447.2,592.10 1447.8,592.75 1452.8,592.75 1453.4,592.10 1455.4,592.10 1456.0,592.75 1459.0,592.75 1459.6,592.10 1463.6,592.10 1464.2,592.75 1468.2,592.75 1468.8,592.10 1471.8,592.10 1472.4,592.75 1482.4,592.75 1483.0,592.10 1485.0,592.10 1485.6,592.75 1489.6,592.75 1490.2,592.10 1491.2,592.10 1491.8,592.75 1494.8,592.75 1495.4,592.10 1496.4,592.10 1497.0,592.75 1500.0,592.75 1500.6,592.10 1503.6,592.10 1504.2,592.75 1507.2,592.75 1507.8,592.10 1509.8,592.10 1510.4,592.75 1513.4,592.75 1514.0,592.10 1517.0,592.10 1517.6,592.75 1523.6,592.75 1524.2,592.10 1528.2,592.10 1528.8,592.75 1538.8,592.75 1539.4,592.10 1540.4,592.10 1541.0,592.75 1546.0,592.75 1546.6,592.10 1548.6,592.10 1549.2,592.75 1559.2,592.75 1559.8,592.10 1560.8,592.10 1561.4,592.75 1571.4,592.75 1572.0,592.10 1573.0,592.10 1573.6,592.75 1578.6,592.75 1579.2,592.10 1581.2,592.10 1581.8,592.75 1586.8,592.75 1587.4,592.10 1589.4,592.10 1590.0,592.75 1595.0,592.75 1595.6,592.10 1597.6,592.10 1598.2,592.75 1600.2,592.75 1600.8,592.10 1603.8,592.10 1604.4,592.75 1609.4,592.75 1610.0,592.10 1613.0,592.10 1613.6,592.75 1621.6,592.75 1622.2,592.10 1623.2,592.10 1623.8,592.75 1631.8,592.75 1632.4,592.10 1634.4,592.10 1635.0,592.75 1638.0,592.75 1638.6,592.10 1640.6,592.10 1641.2,592.75 1643.2,592.75 1643.8,592.10 1645.8,592.10 1646.4,592.75 1652.4,592.75 1653.0,592.10 1656.0,592.10 1656.6,592.75 1666.6,592.75 1667.2,592.10 1669.2,592.10 1668.0,592.80 1673.3,592.60 1676.0,591.90 1682.6,590.40 1688.0,589.70 1695.6,589.10 1705.0,589.30 1712.0,589.00 1722.0,589.50 1732.6,589.40 1740.0,590.30 1751.0,591.70 1757.0,591.20 1766.0,591.30 1768.0,592.30 1769.6,594.40 1771.5,598.00 1773.3,602.80 1774.8,607.00 1776.1,612.00 1777.0,619.00 1778.0,626.90 1779.4,636.00 1780.7,645.40 1782.5,657.00 1784.4,667.60 1786.0,674.00 1788.1,680.60 1790.0,688.00 1791.9,695.40 1793.0,701.00 1794.0,706.50 1795.6,712.00 1797.4,717.60 1799.0,722.50 1801.1,726.90 1803.5,729.60 1806.7,732.40 1810.0,735.60 1814.0,738.90 1817.0,742.40 1819.6,745.40 1824.0,748.60 1828.9,750.90 1834.0,752.40 1840.0,753.70 1845.0,755.10 1849.3,756.10 1853.0,756.60 1857.4,756.50" fill="none" stroke="#a02424" stroke-width="1.05" stroke-linejoin="round" />
<polyline points="102.5,840.00 104.0,839.20 110.0,838.75 130.0,837.50 147.5,837.50 150.0,838.75 165.0,838.75 182.5,835.50 207.5,834.25 212.5,835.50 220.0,835.00 240.0,833.00 265.0,832.00 272.5,833.25 282.5,832.50 287.5,833.50 310.0,831.25 320.0,831.25 322.5,832.50 345.0,832.50 350.0,831.25 367.5,830.75 370.0,830.00 372.5,831.25 382.5,832.50 402.5,832.50 410.0,831.25 425.0,830.50 432.5,830.50 442.5,832.50 457.5,832.50 470.0,830.75 490.0,830.50 495.0,831.25 510.0,831.25 515.0,830.50 530.0,830.00 535.0,828.75 538.8,829.25 545.0,831.25 565.0,831.25 570.0,830.50 580.0,830.50 585.0,829.50 597.5,829.50 602.5,830.50 615.0,830.50 620.0,829.25 632.5,828.75 642.5,828.25 652.5,830.50 662.5,830.50 665.0,829.50 670.0,830.50 682.5,828.25 707.5,828.25 712.5,829.50 730.0,829.50 740.0,828.00 750.0,828.00 757.5,826.75 767.5,829.25 782.5,829.25 792.5,827.00 810.0,827.00 816.2,829.50 837.5,829.50 842.5,828.25 865.0,828.25 872.5,830.50 887.5,830.50 892.5,829.50 917.5,829.50 927.5,831.75 932.5,830.75 935.0,831.75 977.5,831.75 987.5,833.25 1005.0,832.00 1025.0,831.75 1035.0,833.25 1047.5,833.25 1052.5,832.50 1060.0,832.50 1070.0,831.25 1085.0,831.25 1091.2,833.25 1097.5,833.25 1100.0,832.50 1105.0,833.25 1117.5,833.00 1132.5,831.25 1145.0,831.25 1151.2,833.25 1160.0,833.00 1165.0,833.25 1180.0,831.25 1200.0,831.25 1206.2,833.25 1225.0,833.75 1240.0,832.50 1260.0,832.50 1262.5,833.25 1295.0,833.25 1300.0,832.50 1322.5,832.50 1330.0,834.25 1335.0,833.25 1350.0,832.50 1375.0,832.50 1381.2,834.25 1395.0,835.00 1405.0,834.25 1432.5,834.25 1441.2,836.25 1490.0,836.25 1492.5,837.50 1527.5,837.50 1530.0,836.50 1540.0,837.00 1543.8,838.25 1602.5,838.25 1606.2,839.25 1632.5,839.25 1637.5,838.25 1662.5,838.25 1665.0,839.00 1667.5,838.25 1673.8,839.25 1690.0,839.25 1692.5,838.25 1700.0,838.25 1705.0,837.00 1717.5,837.00 1720.0,838.25 1730.0,838.75 1733.8,839.50 1737.5,838.75 1747.5,838.00 1757.5,836.50 1765.0,836.50 1767.5,837.50 1782.5,837.50 1786.2,838.75 1792.5,838.75 1795.0,837.50 1807.5,837.00 1815.0,835.75 1818.8,834.50 1822.5,835.00 1828.8,837.50 1850.0,837.50 1852.5,836.25 1857.4,836.25" fill="none" stroke="#1010c8" stroke-width="1.25" stroke-linejoin="round" />
<polyline points="102.4,881.40 300.0,881.20 316.0,881.51 327.0,881.52 334.0,881.52 345.0,881.23 356.0,881.53 363.0,881.84 374.0,881.84 385.0,881.85 401.0,881.26 412.0,881.57 428.0,881.28 453.0,881.59 464.0,881.60 489.0,881.61 496.0,881.62 507.0,881.62 532.0,881.64 539.0,881.94 564.0,881.66 571.0,881.66 582.0,881.97 589.0,881.67 614.0,881.69 621.0,881.39 637.0,881.70 653.0,881.41 678.0,881.73 694.0,881.74 719.0,881.75 744.0,881.77 769.0,881.48 785.0,881.79 796.0,881.50 803.0,881.80 819.0,881.81 830.0,882.12 841.0,882.12 852.0,881.53 863.0,881.84 888.0,881.55 899.0,881.86 910.0,881.57 935.0,882.18 960.0,881.90 976.0,882.21 983.0,882.21 990.0,882.21 1015.0,881.63 1022.0,881.63 1038.0,882.24 1045.0,881.95 1056.0,881.95 1063.0,882.26 1079.0,881.97 1090.0,882.27 1101.0,881.68 1117.0,881.69 1128.0,881.70 1144.0,882.01 1160.0,882.02 1171.0,881.72 1178.0,882.33 1185.0,882.03 1201.0,882.04 1212.0,882.05 1228.0,882.06 1253.0,882.07 1269.0,881.78 1285.0,882.09 1292.0,882.10 1299.0,882.10 1315.0,882.11 1326.0,882.12 1342.0,882.43 1353.0,882.43 1378.0,882.15 1394.0,882.46 1401.0,882.46 1408.0,882.16 1415.0,882.17 1440.0,882.18 1465.0,882.20 1490.0,881.91 1515.0,882.53 1526.0,882.24 1542.0,882.25 1553.0,881.95 1569.0,882.26 1580.0,882.27 1587.0,882.57 1612.0,882.29 1619.0,882.29 1644.0,882.61 1655.0,882.61 1662.0,882.02 1673.0,882.32 1689.0,882.03 1696.0,882.64 1712.0,882.65 1728.0,882.36 1735.0,882.66 1746.0,882.67 1757.0,882.37 1773.0,882.08 1780.0,882.09 1796.0,882.40 1806.0,882.50 1808.0,882.60 1809.0,881.00 1811.0,880.80 1857.4,880.80" fill="none" stroke="#e41c1c" stroke-width="1.05" stroke-linejoin="round" />
  <!-- x axis -->
  <rect x="102" y="892.6" width="1755" height="1" fill="#5585b8"/>
  <rect x="978.9" y="887.4" width="1.1" height="5.4" fill="#4a80b0"/>
  <path d="M102.4 893.1 L109.6 888.8 V897.4 Z" fill="#4682b4"/>
  <path d="M1857.6 893.1 L1850.4 888.8 V897.4 Z" fill="#4682b4"/>
  <!-- y axis -->
  <rect x="101.15" y="588" width="1.25" height="301" fill="#0808b4"/>
  <path d="M101.8 583.6 L106.2 592 H97.4 Z" fill="#0000ff"/>
  <path d="M101.8 893.2 L106.4 885.2 H97.2 Z" fill="#0000ff"/>
  <g fill="#1414c0"><rect x="102" y="596.42" width="2.2" height="1.1"/><rect x="102" y="609.28" width="2.2" height="1.1"/><rect x="102" y="622.15" width="2.2" height="1.1"/><rect x="102" y="635.02" width="2.2" height="1.1"/><rect x="102" y="647.88" width="2.2" height="1.1"/><rect x="102" y="660.70" width="5" height="1.2"/><rect x="102" y="673.62" width="2.2" height="1.1"/><rect x="102" y="686.48" width="2.2" height="1.1"/><rect x="102" y="699.35" width="2.2" height="1.1"/><rect x="102" y="712.22" width="2.2" height="1.1"/><rect x="102" y="725.08" width="2.2" height="1.1"/><rect x="102" y="737.90" width="5" height="1.2"/><rect x="102" y="750.82" width="2.2" height="1.1"/><rect x="102" y="763.68" width="2.2" height="1.1"/><rect x="102" y="776.55" width="2.2" height="1.1"/><rect x="102" y="789.42" width="2.2" height="1.1"/><rect x="102" y="802.28" width="2.2" height="1.1"/><rect x="102" y="815.10" width="5" height="1.2"/><rect x="102" y="828.02" width="2.2" height="1.1"/><rect x="102" y="840.88" width="2.2" height="1.1"/><rect x="102" y="853.75" width="2.2" height="1.1"/><rect x="102" y="866.62" width="2.2" height="1.1"/><rect x="102" y="879.48" width="2.2" height="1.1"/></g>
  <text class="cf" transform="translate(52.3 739) rotate(-90)" text-anchor="middle" font-size="11" letter-spacing=".5" fill="#2424c4">Pressure Setpoint (psig)</text>
  <text class="cf" x="979.5" y="575.6" text-anchor="middle" font-size="20.7" letter-spacing=".25" fill="#0a0a14">Boiler #2</text>
</svg>
<div class="t cf" style="left:22.5px;top:538.8px;font-size:10.5px;line-height:13px;color:#1c1c74;letter-spacing:.62px;text-decoration:underline;text-underline-offset:1.2px">00:00:01.000</div>
<div class="t cf" style="left:1844px;top:538.8px;font-size:11px;line-height:13px;color:#1c1c74;letter-spacing:.16px;text-decoration:underline;text-underline-offset:.8px">Automatic</div>
<div class="yl cf" style="top:585.2px">200.00</div>
<div class="yl cf" style="top:655.2px;left:34.6px">150.00</div>
<div class="yl cf" style="top:732.2px;left:34.6px">100.00</div>
<div class="yl cf" style="top:809.6px;left:34.6px">50.00</div>
<div class="yl cf" style="top:880.2px;left:34.6px">0.00</div>
<div class="xl cf" style="left:80px;top:896.5px">10:09:59 AM<br>3/7/2019</div>
<div class="xl cf" style="left:919.5px;top:896.5px">10:24:59 AM<br>3/7/2019</div>
<div class="xl cf" style="left:1759.6px;top:896.5px">10:39:59 AM<br>3/7/2019</div>
<div class="t cf" style="left:19px;top:947.4px;font-size:12px;line-height:13px;color:#08081c;letter-spacing:.3px">Tags</div>


<!-- ===== bottom navigation ===== -->
<div class="bb nav" style="left:1px;width:160px;top:981px"><span class="nt">Overview</span></div>
<div class="bb nav" style="left:161px;width:159px;top:981px"><span class="nt">Feedwater<br>Overview</span></div>
<div class="bb nav" style="left:320px;width:160px;top:981px"><span class="nt">Boiler 1</span></div>
<div class="bb nav" style="left:480px;width:160px;top:981px"><span class="nt">Boiler 3</span></div>
<div class="bb nav" style="left:640px;width:160px;top:981px"><span class="nt">Trends</span></div>
<div class="bb nav" style="left:800px;width:160px;top:981px"><span class="nt">Active<br>Alarms</span></div>
<div class="bb nav" style="left:960px;width:159px;top:981px"></div>
<div class="bb nav" style="left:1119px;width:160px;top:981px"></div>
<div class="bb nav" style="left:1279px;width:160px;top:981px"></div>
<div class="bb nav" style="left:1439px;width:160px;top:981px"><span class="nt">Report<br>Data</span></div>
<div class="bb nav" style="left:1px;width:160px;top:1030px"><span class="nt">Boiler Overview</span></div>
<div class="bb nav" style="left:161px;width:159px;top:1030px"><span class="nt">Makeup Air and<br>Steam Overview</span></div>
<div class="bb nav sel" style="left:320px;width:160px;top:1030px"><span class="nt">Boiler 2</span></div>
<div class="bb nav" style="left:480px;width:160px;top:1030px"><span class="nt">Boiler 4</span></div>
<div class="bb nav" style="left:640px;width:160px;top:1030px"></div>
<div class="bb nav" style="left:800px;width:160px;top:1030px"><span class="nt">Alarm<br>History</span></div>
<div class="bb nav" style="left:960px;width:159px;top:1030px"></div>
<div class="bb nav" style="left:1119px;width:160px;top:1030px"></div>
<div class="bb nav" style="left:1279px;width:160px;top:1030px"></div>
<div class="bb nav" style="left:1439px;width:160px;top:1030px"><span class="nt">Report<br>Viewer</span></div>

<!-- date panel -->
<div class="abs" style="left:1599px;top:981px;width:320px;height:99px;background:#0000ff;border:2px solid #fff;border-right-color:#f0f0ff;border-bottom-color:#f0f0ff"></div>
<div class="abs" style="left:1605px;top:987px;width:308px;height:88px;background:#a0a0a4;border:2px solid #5050c8;border-right-color:#b4b4fc;border-bottom-color:#b4b4fc"></div>
<div class="t" style="left:1595px;width:320px;top:998px;text-align:center;font-size:14.5px;color:#1c1cc8">Thursday, March 07, 2019 10:40:00 AM</div>
<div class="bb" style="left:1678px;top:1024px;width:80px;height:42px;font-size:12px;line-height:14px;padding-top:1px"><span class="nt">O&amp;M Access</span></div>
<div class="bb" style="left:1758px;top:1024px;width:80px;height:42px;font-size:12px;line-height:14px;padding-top:1px"><span class="nt">Keyboard</span></div>

</body>
</html>
